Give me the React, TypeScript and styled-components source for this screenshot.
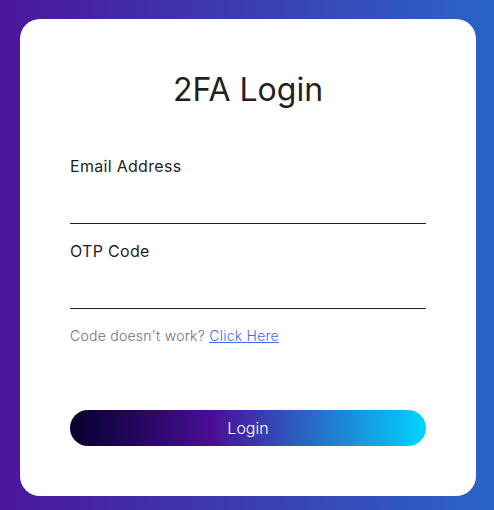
import React from "react";
import styled, { createGlobalStyle } from "styled-components";

const GlobalStyle = createGlobalStyle`
  html, body {
    margin: 0;
    padding: 0;
  }
  body {
    font-family: "Inter", "Open Sans", sans-serif;
  }
  * { box-sizing: border-box; }
`;

const Page = styled.div`
  width: 494px;
  height: 510px;
  background: linear-gradient(90deg, #4b169c 0%, #2b64c8 100%);
  padding: 19px 18px 14px 20px;
`;

const Card = styled.form`
  background: #ffffff;
  border-radius: 20px;
  height: 477px;
  padding: 47px 50px 50px;
  display: flex;
  flex-direction: column;
`;

const Title = styled.h1`
  margin: 0 0 40px;
  font-size: 32px;
  line-height: 48px;
  font-weight: 400;
  color: #1f1f24;
  text-align: center;
`;

const Field = styled.div`
  display: flex;
  flex-direction: column;
  margin-bottom: 15px;
`;

const Label = styled.label`
  font-size: 16px;
  line-height: 24px;
  letter-spacing: 0.3px;
  color: #1f1f24;
`;

const Input = styled.input`
  height: 46px;
  border: none;
  border-bottom: 1px solid #222;
  outline: none;
  font-size: 16px;
  font-family: inherit;
  background: transparent;
  padding: 0;
`;

const Hint = styled.p`
  margin: 1px 0 0;
  font-size: 14px;
  line-height: 21px;
  font-weight: 300;
  letter-spacing: 0.25px;
  color: #6f6f78;
`;

const Link = styled.a`
  color: #3f6cf0;
  text-decoration: underline;
`;

const Button = styled.button`
  margin-top: auto;
  height: 36px;
  border: none;
  border-radius: 18px;
  background: linear-gradient(90deg, #06002e 0%, #4a0e96 40%, #00d4ff 100%);
  color: #ffffff;
  font-family: inherit;
  font-size: 16px;
  font-weight: 300;
  cursor: pointer;
`;

export default function App() {
  return (
    <>
      <GlobalStyle />
      <Page>
        <Card onSubmit={(e) => e.preventDefault()}>
          <Title>2FA Login</Title>
          <Field>
            <Label htmlFor="email">Email Address</Label>
            <Input id="email" type="email" />
          </Field>
          <Field>
            <Label htmlFor="otp">OTP Code</Label>
            <Input id="otp" type="text" />
          </Field>
          <Hint>
            Code doesn't work? <Link href="#">Click Here</Link>
          </Hint>
          <Button type="submit">Login</Button>
        </Card>
      </Page>
    </>
  );
}
